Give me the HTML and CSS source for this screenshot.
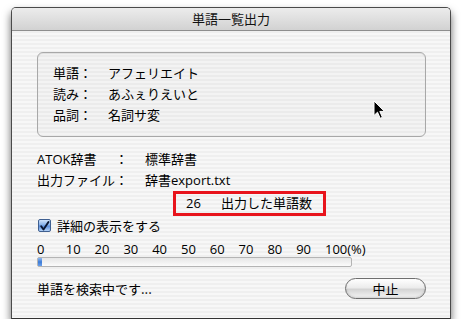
FILE: index.html
```html
<!DOCTYPE html>
<html lang="ja">
<head>
<meta charset="utf-8">
<title>単語一覧出力</title>
<link rel="stylesheet" href="styles.css">
</head>
<body>
<div class="window">
  <div class="titlebar">単語一覧出力</div>
  <div class="content">
    <div class="group">
      <div class="grow"><span class="glbl">単語：</span><span>アフェリエイト</span></div>
      <div class="grow"><span class="glbl">読み：</span><span>あふぇりえいと</span></div>
      <div class="grow"><span class="glbl">品詞：</span><span>名詞サ変</span></div>
    </div>
    <div class="info">
      <span class="iname">ATOK辞書</span><span class="icolon">：</span><span class="ival">標準辞書</span>
      <span class="iname">出力ファイル</span><span class="icolon">：</span><span class="ival">辞書export.txt</span>
    </div>
    <div class="countbox"><span class="num">26</span><span>出力した単語数</span></div>
    <label class="check"><span class="box"><svg width="13" height="13" viewBox="0 0 13 13"><path d="M2.6 6.2 L5.3 10 L11.2 1.2" fill="none" stroke="#0a1633" stroke-width="2.3" stroke-linecap="round" stroke-linejoin="round"/></svg></span><span>詳細の表示をする</span></label>
    <div class="scale">
      <span>0</span><span>10</span><span>20</span><span>30</span><span>40</span><span>50</span><span>60</span><span>70</span><span>80</span><span>90</span><span class="last">100(%)</span>
    </div>
    <div class="progress"><div class="fill" style="width:4px"></div></div>
    <div class="footer">
      <span class="status">単語を検索中です...</span>
      <button class="btn">中止</button>
    </div>
  </div>
  <svg class="cursor" width="13" height="20" viewBox="0 0 13 20"><path d="M1 1 L1 15.5 L4.5 12.2 L7.2 18.3 L9.4 17.3 L6.8 11.4 L11.5 11.4 Z" fill="#000" stroke="#fff" stroke-width="1"/></svg>
</div>
</body>
</html>
```

FILE: styles.css
```css
html, body {
  margin: 0;
  padding: 0;
  background: #fff;
}
body {
  font-family: "Open Sans", "Noto Sans CJK JP", sans-serif;
  font-size: 13px;
  color: #000;
}
.window {
  position: relative;
  margin: 7px 0 0 11px;
  width: 438px;
  height: 310px;
  border: 1px solid #4a4a4a;
  border-bottom-color: #333;
  border-radius: 5px 5px 0 0;
  box-shadow: 0 5px 9px rgba(0,0,0,0.6);
  overflow: hidden;
  display: flex;
  flex-direction: column;
}
.titlebar {
  height: 22px;
  line-height: 22px;
  text-align: center;
  font-family: "Noto Sans CJK JP", sans-serif;
  background: linear-gradient(#ececec, #d2d2d2);
  border-bottom: 1px solid #8e8e8e;
  color: #111;
}
.content {
  flex: 1;
  padding: 21px 24px 0 25px;
  background: repeating-linear-gradient(#efefef 0 2px, #f7f7f7 2px 4px);
  display: flex;
  flex-direction: column;
}
.group {
  height: 63px;
  border: 1px solid #a8a8a8;
  border-radius: 6px;
  padding: 10px 15px;
  background: rgba(0,0,0,0.015);
  box-shadow: inset 0 1px 1px rgba(0,0,0,0.08);
}
.grow {
  height: 21px;
  line-height: 21px;
  display: flex;
}
.glbl {
  width: 55px;
}
.info {
  margin-top: 12px;
  display: grid;
  grid-template-columns: 78px 13px auto;
  grid-auto-rows: 21px;
  line-height: 21px;
}
.icolon {
  text-align: center;
}
.ival {
  padding-left: 17px;
}
.countbox {
  margin-left: 136px;
  width: 137px;
  height: 19px;
  line-height: 19px;
  border: 3px solid #e8141c;
  display: flex;
  padding-left: 10px;
}
.countbox .num {
  width: 35px;
}
.check {
  height: 18px;
  display: flex;
  align-items: center;
  gap: 6px;
  padding-left: 1px;
}
.box {
  width: 13px;
  height: 13px;
  box-sizing: border-box;
  border: 1px solid #3f5f90;
  border-radius: 2px;
  background: linear-gradient(#cfe2fb, #86b0ea 45%, #5b8ede 55%, #b3d1f6);
  display: flex;
}
.scale {
  margin-top: 7px;
  height: 16px;
  line-height: 16px;
  display: flex;
}
.scale span {
  width: 28.8px;
  flex: none;
}
.scale .last {
  width: auto;
}
.progress {
  width: 313px;
  height: 8px;
  border: 1px solid #b4b4b4;
  border-radius: 2px;
  background: linear-gradient(#e6e6e6, #fbfbfb);
}
.fill {
  height: 100%;
  background: linear-gradient(#8fb8ef, #3d7bd6 50%, #6aa0ea);
}
.footer {
  margin-top: 11px;
  display: flex;
  align-items: center;
  justify-content: space-between;
}
.status {
  font-family: "Noto Sans CJK JP", sans-serif;
}
.btn {
  width: 81px;
  height: 21px;
  border: 1px solid #6e6e6e;
  border-radius: 11px;
  background: linear-gradient(#ffffff, #ececec 45%, #d4d4d4 55%, #f6f6f6);
  box-shadow: inset 0 -1px 2px rgba(0,0,0,0.15);
  font-family: "Noto Sans CJK JP", sans-serif;
  font-size: 13px;
  line-height: 19px;
  padding: 0;
  color: #000;
}
.cursor {
  position: absolute;
  left: 361px;
  top: 92px;
}
```
